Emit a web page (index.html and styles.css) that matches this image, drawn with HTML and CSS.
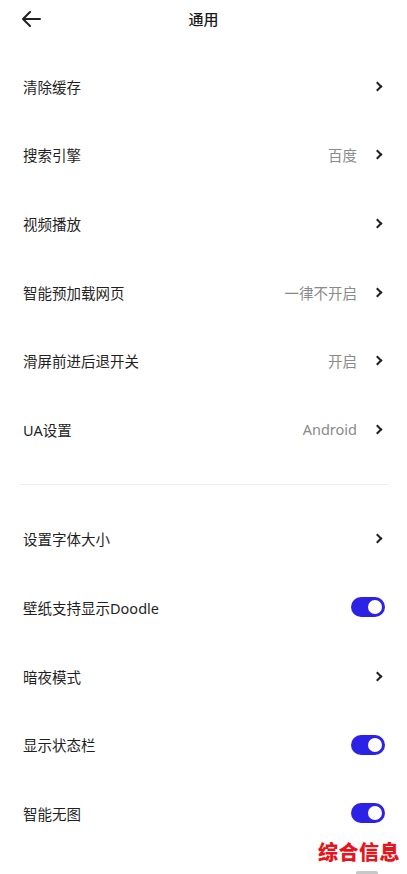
FILE: index.html
```html
<!DOCTYPE html>
<html lang="zh">
  <head>
    <meta charset="UTF-8" />
    <meta name="viewport" content="width=device-width, initial-scale=1.0" />
    <title>通用</title>
    <link rel="stylesheet" href="styles.css">
  </head>
  <body>
    <div class="page">
      <div class="header">
        <span class="back">
          <svg width="20" height="16" viewBox="0 0 20 16">
            <path d="M19 8H2M9 1L2 8l7 7" fill="none" stroke="#222" stroke-width="2" stroke-linecap="round" stroke-linejoin="round"/>
          </svg>
        </span>
        <div class="title">通用</div>
      </div>

      <div class="list list-top">
        <div class="row">
          <span class="label">清除缓存</span>
          <span class="right"><i class="chev"></i></span>
        </div>
        <div class="row">
          <span class="label">搜索引擎</span>
          <span class="right"><span class="value">百度</span><i class="chev"></i></span>
        </div>
        <div class="row">
          <span class="label">视频播放</span>
          <span class="right"><i class="chev"></i></span>
        </div>
        <div class="row">
          <span class="label">智能预加载网页</span>
          <span class="right"><span class="value">一律不开启</span><i class="chev"></i></span>
        </div>
        <div class="row">
          <span class="label">滑屏前进后退开关</span>
          <span class="right"><span class="value">开启</span><i class="chev"></i></span>
        </div>
        <div class="row">
          <span class="label">UA设置</span>
          <span class="right"><span class="value">Android</span><i class="chev"></i></span>
        </div>
      </div>

      <div class="divider"></div>

      <div class="list">
        <div class="row">
          <span class="label">设置字体大小</span>
          <span class="right"><i class="chev"></i></span>
        </div>
        <div class="row">
          <span class="label">壁纸支持显示Doodle</span>
          <span class="toggle on"></span>
        </div>
        <div class="row">
          <span class="label">暗夜模式</span>
          <span class="right"><i class="chev"></i></span>
        </div>
        <div class="row">
          <span class="label">显示状态栏</span>
          <span class="toggle on"></span>
        </div>
        <div class="row">
          <span class="label">智能无图</span>
          <span class="toggle on"></span>
        </div>
      </div>

      <div class="watermark">综合信息</div>
      <div class="peek"></div>
    </div>
  </body>
</html>
```

FILE: styles.css
```css
body {
  margin: 0;
  padding: 0;
  background-color: #ffffff;
  font-family: "Noto Sans", "Noto Sans CJK SC", sans-serif;
  color: #1f1f1f;
}

.page {
  position: relative;
  width: 407px;
  height: 874px;
  overflow: hidden;
}

.header {
  position: relative;
  height: 38px;
  display: flex;
  align-items: center;
  justify-content: center;
}

.back {
  position: absolute;
  left: 21px;
  top: 11px;
  display: flex;
}

.title {
  font-size: 15px;
  font-weight: 500;
  color: #1a1a1a;
  margin-top: -2px;
}

.list {
  padding: 0 22px 0 23px;
}

.list-top {
  margin-top: 14px;
}

.row {
  height: 68.6px;
  display: flex;
  align-items: center;
  justify-content: space-between;
}

.label {
  font-size: 14.5px;
  color: #1f1f1f;
}

.right {
  display: flex;
  align-items: center;
}

.value {
  font-size: 14.5px;
  color: #8a8a8a;
  margin-right: 17px;
}

.chev {
  display: block;
  width: 5px;
  height: 5px;
  border-top: 2px solid #222;
  border-right: 2px solid #222;
  transform: rotate(45deg);
  margin-right: 4px;
}

.divider {
  height: 1px;
  background-color: #ececec;
  margin: 20px 19px 20px 20px;
}

.toggle {
  position: relative;
  width: 34px;
  height: 20px;
  border-radius: 10px;
  background-color: #2b22e6;
}

.toggle::after {
  content: "";
  position: absolute;
  right: 3px;
  top: 3px;
  width: 14px;
  height: 14px;
  border-radius: 50%;
  background-color: #ffffff;
}

.watermark {
  position: absolute;
  right: 7px;
  bottom: 8px;
  font-size: 20px;
  font-weight: 900;
  color: #e8141b;
  letter-spacing: 0.5px;
}

.peek {
  position: absolute;
  left: 356px;
  bottom: 0;
  width: 22px;
  height: 3px;
  background-color: #c8c8c8;
  border-radius: 2px 2px 0 0;
}
```
